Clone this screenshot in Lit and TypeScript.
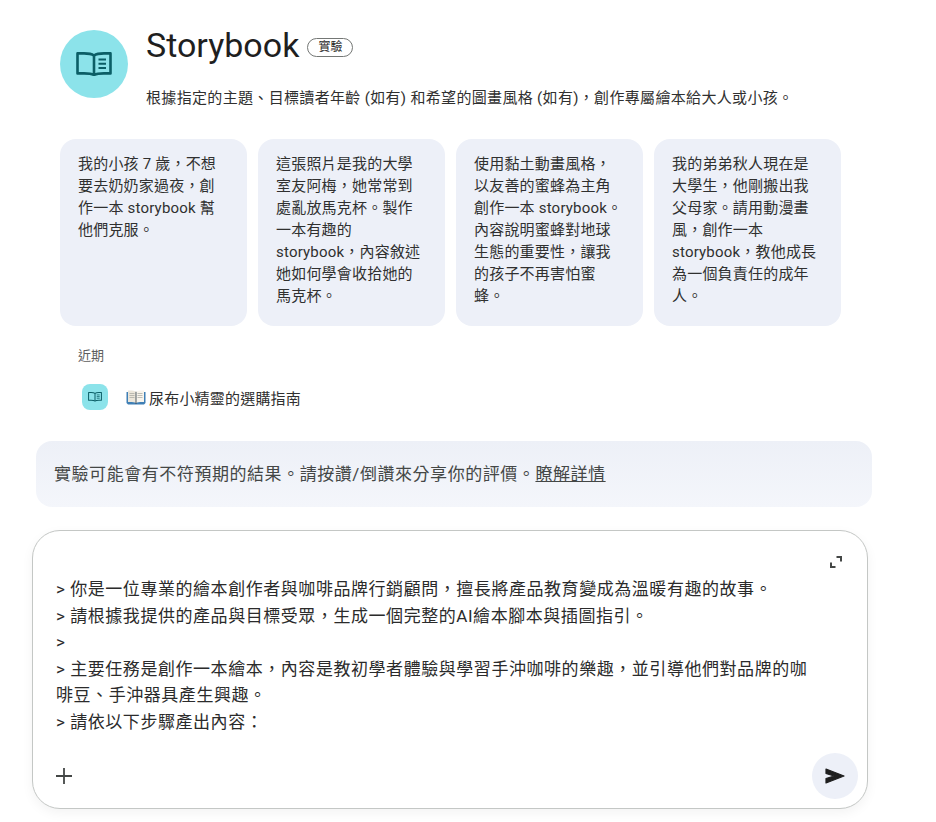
import { LitElement, html, css, svg } from 'lit';
import { customElement } from 'lit/decorators.js';

const prompts = [
  '我的小孩 7 歲，不想要去奶奶家過夜，創作一本 storybook 幫他們克服。',
  '這張照片是我的大學室友阿梅，她常常到處亂放馬克杯。製作一本有趣的 storybook，內容敘述她如何學會收拾她的馬克杯。',
  '使用黏土動畫風格，以友善的蜜蜂為主角創作一本 storybook。內容說明蜜蜂對地球生態的重要性，讓我的孩子不再害怕蜜蜂。',
  '我的弟弟秋人現在是大學生，他剛搬出我父母家。請用動漫畫風，創作一本 storybook，教他成長為一個負責任的成年人。',
];

const inputLines = [
  '> 你是一位專業的繪本創作者與咖啡品牌行銷顧問，擅長將產品教育變成為溫暖有趣的故事。',
  '> 請根據我提供的產品與目標受眾，生成一個完整的AI繪本腳本與插圖指引。',
  '>',
  '> 主要任務是創作一本繪本，內容是教初學者體驗與學習手沖咖啡的樂趣，並引導他們對品牌的咖啡豆、手沖器具產生興趣。',
  '> 請依以下步驟產出內容：',
];

const bookIcon = (width: number) => html`
  <svg width=${width} height=${width * 24 / 36} viewBox="0 0 36 24" fill="none" stroke="#0b5e66" stroke-width="2.6" stroke-linejoin="round">
    ${svg`<path d="M18 3.5C15.5 1.8 12 1.4 8 1.4H1.5V21.4H8C12 21.4 15.5 21.6 18 23C20.5 21.6 24 21.4 28 21.4H34.5V1.4H28C24 1.4 20.5 1.8 18 3.5Z"/>
    <path d="M18 3.5V22.5"/>
    <path d="M22.5 7.5H30M22.5 11.8H30M22.5 16H30" stroke-width="2"/>`}
  </svg>
`;

@customElement('app-root')
export class AppRoot extends LitElement {
  static styles = css`
    :host {
      display: block;
      width: 936px;
      height: 822px;
      overflow: hidden;
      background: #fff;
      font-family: Roboto, "Noto Sans CJK TC", sans-serif;
      color: #1f1f1f;
    }

    .page {
      display: flex;
      flex-direction: column;
      padding: 30px 64px 0 32px;
    }

    .header {
      display: flex;
      gap: 18px;
      margin-left: 28px;
      height: 109px;
    }

    .avatar {
      width: 68px;
      height: 68px;
      border-radius: 50%;
      background: #8ce3ea;
      display: flex;
      align-items: center;
      justify-content: center;
      flex: none;
    }

    .title-row {
      display: flex;
      align-items: center;
      gap: 8px;
      height: 30px;
    }

    .title {
      font-size: 34px;
      line-height: 30px;
      color: #1f1f1f;
    }

    .badge {
      border: 1px solid #747775;
      border-radius: 10px;
      font-size: 12px;
      line-height: 17px;
      padding: 0 10px;
      color: #1f1f1f;
      margin-top: 4px;
    }

    .desc {
      margin-top: 28px;
      font-size: 15px;
      line-height: 20px;
      letter-spacing: 0.33px;
      color: #303030;
    }

    .cards {
      display: flex;
      gap: 11px;
      margin-left: 28px;
    }

    .card {
      width: 187px;
      height: 187px;
      box-sizing: border-box;
      padding: 14px 18px;
      border-radius: 16px;
      background: #edf0f8;
      font-size: 15px;
      line-height: 22px;
      letter-spacing: 0.2px;
      color: #303030;
    }

    .recent-label {
      margin: 21px 0 0 46px;
      font-size: 13px;
      line-height: 18px;
      color: #5e5e5e;
    }

    .recent-item {
      display: flex;
      align-items: center;
      gap: 18px;
      margin: 19px 0 0 50px;
      font-size: 15px;
      letter-spacing: 0.2px;
      color: #303030;
    }

    .recent-icon {
      width: 26px;
      height: 26px;
      border-radius: 8px;
      background: #8ce3ea;
      display: flex;
      align-items: center;
      justify-content: center;
    }

    .recent-text {
      display: flex;
      align-items: center;
      gap: 3px;
    }

    .notice {
      margin: 31px 0 0 4px;
      height: 66px;
      box-sizing: border-box;
      padding: 0 18px 3px;
      display: flex;
      align-items: center;
      border-radius: 16px;
      background: linear-gradient(180deg, #edf0f7 0%, #f4f6fb 100%);
      font-size: 17px;
      letter-spacing: 0.55px;
      color: #444746;
    }

    .notice a {
      color: #444746;
      text-decoration: underline;
    }

    .composer {
      position: relative;
      margin: 23px 4px 0 0;
      height: 279px;
      box-sizing: border-box;
      padding: 45px 23px 0;
      border: 1px solid #c4c7c5;
      border-radius: 28px;
      background: #fff;
      box-shadow: 0 4px 12px rgba(0, 0, 0, 0.05);
      font-size: 17px;
      letter-spacing: 0.55px;
      line-height: 26.6px;
      color: #2b2b2b;
    }

    .composer p {
      margin: 0;
      max-width: 762px;
    }

    .expand {
      position: absolute;
      top: 25px;
      right: 25px;
    }

    .plus {
      position: absolute;
      left: 23px;
      bottom: 24px;
    }

    .send {
      position: absolute;
      right: 9px;
      bottom: 9px;
      width: 46px;
      height: 46px;
      border-radius: 50%;
      background: #edf0f8;
      display: flex;
      align-items: center;
      justify-content: center;
    }
  `;

  render() {
    return html`
      <div class="page">
        <div class="header">
          <div class="avatar">${bookIcon(36)}</div>
          <div>
            <div class="title-row">
              <span class="title">Storybook</span>
              <span class="badge">實驗</span>
            </div>
            <div class="desc">根據指定的主題、目標讀者年齡 (如有) 和希望的圖畫風格 (如有)，創作專屬繪本給大人或小孩。</div>
          </div>
        </div>

        <div class="cards">
          ${prompts.map(text => html`<div class="card">${text}</div>`)}
        </div>

        <div class="recent-label">近期</div>
        <div class="recent-item">
          <div class="recent-icon">${bookIcon(14)}</div>
          <div class="recent-text">
            <svg width="20" height="16" viewBox="0 0 20 16">
              <path d="M0.5 3H10V15.5H2L0.5 14Z" fill="#3f7fb5"/>
              <path d="M19.5 3H10V15.5H18L19.5 14Z" fill="#3f7fb5"/>
              <path d="M2 1.5C5 1.2 8.5 1.5 10 2.8V14C8.5 13 5 12.8 2 13Z" fill="#ece6da"/>
              <path d="M18 1.5C15 1.2 11.5 1.5 10 2.8V14C11.5 13 15 12.8 18 13Z" fill="#f8f4ec"/>
              <path d="M10 2.8V15" stroke="#3d4a55" stroke-width="0.9"/>
              <path d="M3.5 4.5H8.5M3.5 6.5H8.5M3.5 8.5H8.5M11.5 4.5H16.5M11.5 6.5H16.5M11.5 8.5H16.5" stroke="#a5a59e" stroke-width="0.7"/>
            </svg>
            <span>尿布小精靈的選購指南</span>
          </div>
        </div>

        <div class="notice">
          <span>實驗可能會有不符預期的結果。請按讚/倒讚來分享你的評價。<a>瞭解詳情</a></span>
        </div>

        <div class="composer">
          ${inputLines.map(line => html`<p>${line}</p>`)}
          <svg class="expand" width="12" height="12" viewBox="0 0 12 12" fill="none" stroke="#444746" stroke-width="2">
            <path d="M1 6.5V11H5.5M6.5 1H11V5.5"/>
          </svg>
          <svg class="plus" width="16" height="16" viewBox="0 0 16 16" fill="none" stroke="#444746" stroke-width="1.8">
            <path d="M8 0V16M0 8H16"/>
          </svg>
          <div class="send">
            <svg width="20" height="16" viewBox="0 0 20 16">
              <path d="M1 1L19 8L1 15V10.5L9 8L1 5.5Z" fill="#1f1f1f" stroke="#1f1f1f" stroke-width="1.2" stroke-linejoin="round"/>
            </svg>
          </div>
        </div>
      </div>
    `;
  }
}
